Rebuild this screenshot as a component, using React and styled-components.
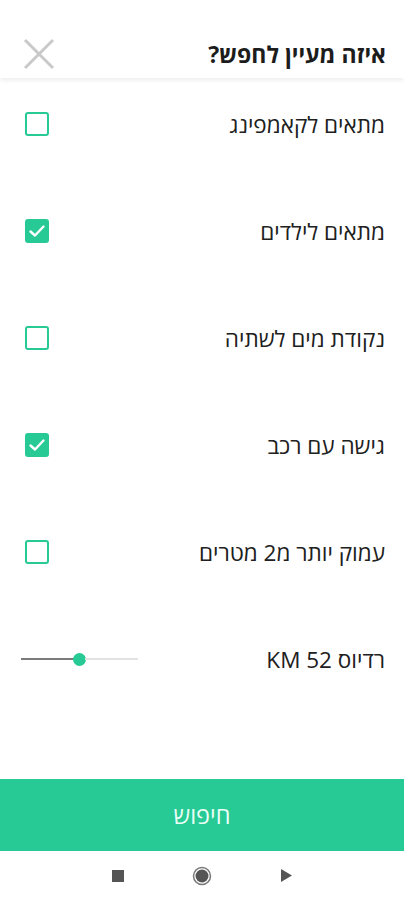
import React from "react";
import styled, { createGlobalStyle } from "styled-components";

const GlobalStyle = createGlobalStyle`
  html, body {
    margin: 0;
    padding: 0;
    background: #ffffff;
  }
  body {
    font-family: "Open Sans", "DejaVu Sans", "Liberation Sans", sans-serif;
  }
`;

const GREEN = "#27c995";

const Screen = styled.div`
  width: 404px;
  height: 900px;
  display: flex;
  flex-direction: column;
  background: #fff;
  overflow: hidden;
`;

const StatusSpace = styled.div`
  height: 30px;
  flex-shrink: 0;
`;

const Header = styled.div`
  height: 48px;
  flex-shrink: 0;
  display: flex;
  flex-direction: row-reverse;
  align-items: center;
  justify-content: space-between;
  padding: 0 18px 0 23px;
  box-shadow: 0 3px 4px rgba(0, 0, 0, 0.06);
  position: relative;
  z-index: 1;
`;

const Title = styled.h1`
  margin: 0;
  direction: rtl;
  font-size: 23px;
  font-weight: 700;
  color: #1c1c1c;
`;

const CloseButton = styled.button`
  border: 0;
  background: none;
  padding: 0;
  width: 32px;
  height: 32px;
  display: flex;
  align-items: center;
  justify-content: center;
`;

const List = styled.div`
  flex: 1;
  display: flex;
  flex-direction: column;
  gap: 59px;
  padding-top: 22px;
`;

const Row = styled.label`
  height: 48px;
  display: flex;
  flex-direction: row-reverse;
  align-items: center;
  justify-content: space-between;
  padding: 0 19px 0 ${(p) => p.$left || 25}px;
`;

const Label = styled.span`
  direction: rtl;
  font-size: 22.5px;
  color: #202020;
`;

const Box = styled.span`
  width: 24px;
  height: 24px;
  box-sizing: border-box;
  border-radius: 3px;
  border: 2.5px solid ${GREEN};
  background: ${(p) => (p.$checked ? GREEN : "#fff")};
  display: flex;
  align-items: center;
  justify-content: center;
`;

const Slider = styled.div`
  width: 117px;
  height: 14px;
  display: flex;
  align-items: center;
`;

const TrackFilled = styled.div`
  height: 2px;
  background: #7a7a7a;
`;

const Thumb = styled.div`
  width: 13px;
  height: 13px;
  border-radius: 50%;
  background: ${GREEN};
  flex-shrink: 0;
  margin: 0 -1px;
`;

const TrackEmpty = styled.div`
  flex: 1;
  height: 2px;
  background: #e2e2e2;
`;

const SearchButton = styled.button`
  height: 72px;
  flex-shrink: 0;
  border: 0;
  background: ${GREEN};
  color: #eafff6;
  font-family: inherit;
  font-size: 23.5px;
  direction: rtl;
`;

const NavBar = styled.div`
  height: 49px;
  flex-shrink: 0;
  display: flex;
  align-items: center;
  justify-content: center;
  gap: 64px;
`;

const NavIcon = styled.div`
  width: 20px;
  height: 20px;
  display: flex;
  align-items: center;
  justify-content: center;
`;

const Check = () => (
  <svg width="18" height="18" viewBox="0 0 18 18">
    <path d="M2.5 9.5 L7 13.5 L15.5 4.5" fill="none" stroke="#fff" strokeWidth="2.4" strokeLinecap="round" strokeLinejoin="round" />
  </svg>
);

const options = [
  { label: "מתאים לקאמפינג", checked: false },
  { label: "מתאים לילדים", checked: true },
  { label: "נקודת מים לשתיה", checked: false },
  { label: "גישה עם רכב", checked: true },
  { label: "עמוק יותר מ2 מטרים", checked: false },
];

export default function App() {
  const radius = 52;
  const filled = 59;
  return (
    <>
      <GlobalStyle />
      <Screen>
        <StatusSpace />
        <Header>
          <Title>איזה מעיין לחפש?</Title>
          <CloseButton aria-label="close">
            <svg width="32" height="32" viewBox="0 0 32 32">
              <path d="M2 2 L30 30 M30 2 L2 30" stroke="#c9c9c9" strokeWidth="3" />
            </svg>
          </CloseButton>
        </Header>
        <List>
          {options.map((o) => (
            <Row key={o.label}>
              <Label>{o.label}</Label>
              <Box $checked={o.checked}>{o.checked && <Check />}</Box>
            </Row>
          ))}
          <Row $left={21}>
            <Label>רדיוס {radius} KM</Label>
            <Slider>
              <TrackFilled style={{ width: filled - 6 }} />
              <Thumb />
              <TrackEmpty />
            </Slider>
          </Row>
        </List>
        <SearchButton>חיפוש</SearchButton>
        <NavBar>
          <NavIcon>
            <svg width="12" height="12" viewBox="0 0 12 12">
              <rect x="0" y="0" width="12" height="12" fill="#555" />
            </svg>
          </NavIcon>
          <NavIcon>
            <svg width="20" height="20" viewBox="0 0 20 20">
              <circle cx="10" cy="10" r="8.5" fill="none" stroke="#777" strokeWidth="1.5" />
              <circle cx="10" cy="10" r="6.5" fill="#555" />
            </svg>
          </NavIcon>
          <NavIcon>
            <svg width="12" height="13" viewBox="0 0 12 13">
              <path d="M1 0 L12 6.5 L1 13 Z" fill="#555" />
            </svg>
          </NavIcon>
        </NavBar>
      </Screen>
    </>
  );
}
